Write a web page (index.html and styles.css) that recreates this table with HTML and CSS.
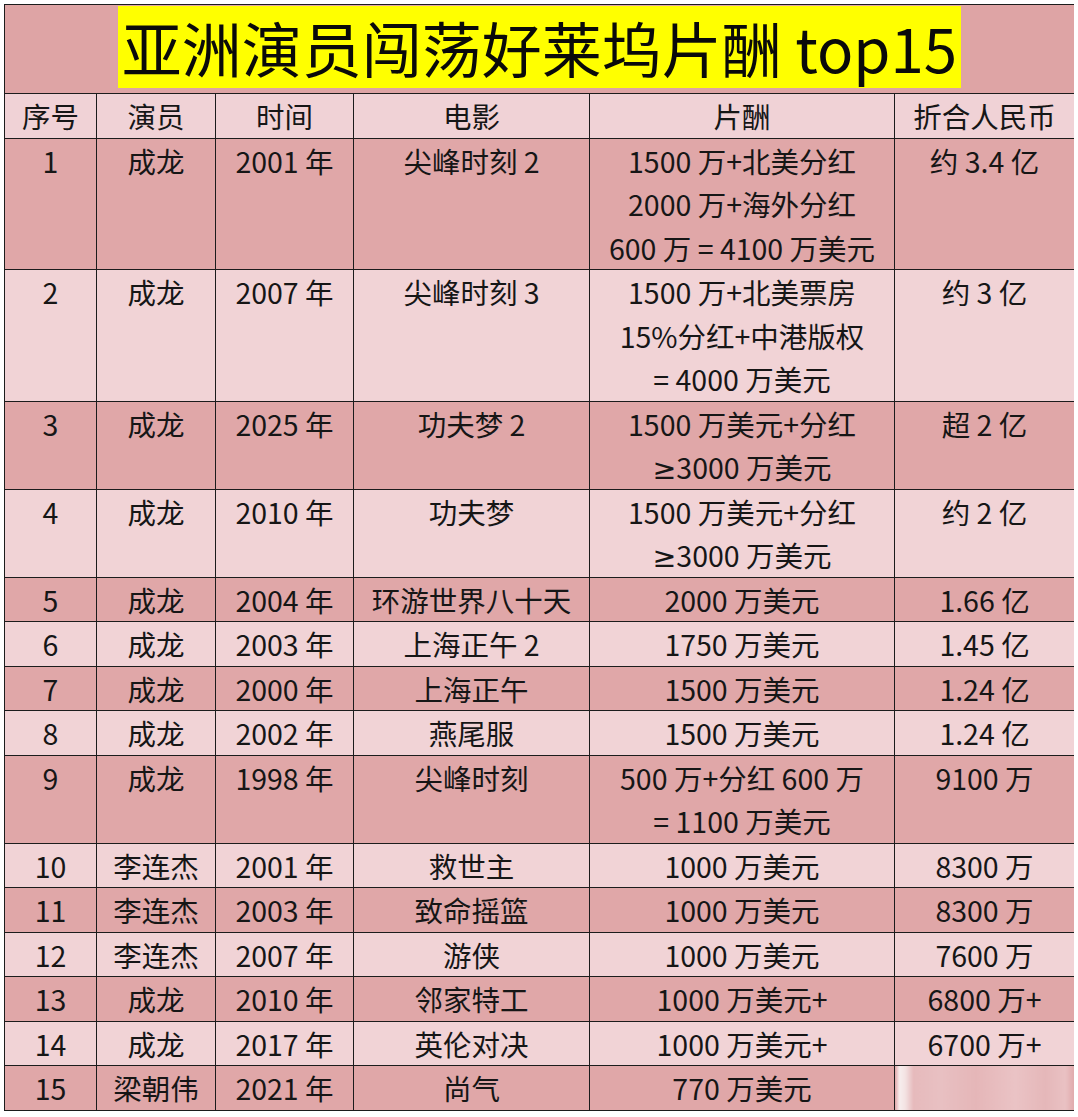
FILE: index.html
```html
<!DOCTYPE html>
<html lang="zh-CN">
<head>
<meta charset="utf-8">
<title>亚洲演员闯荡好莱坞片酬 top15</title>
<link rel="stylesheet" href="styles.css">
</head>
<body>
<table class="pay">
  <colgroup>
    <col class="c1"><col class="c2"><col class="c3"><col class="c4"><col class="c5"><col class="c6">
  </colgroup>
  <thead>
    <tr class="title-row"><th colspan="6"><span class="title">亚洲演员闯荡好莱坞片酬 top15</span></th></tr>
    <tr class="head"><th>序号</th><th>演员</th><th>时间</th><th>电影</th><th>片酬</th><th>折合人民币</th></tr>
  </thead>
  <tbody>
    <tr class="dark"><td>1</td><td>成龙</td><td>2001 年</td><td>尖峰时刻 2</td><td>1500 万+北美分红<br>2000 万+海外分红<br>600 万 = 4100 万美元</td><td>约 3.4 亿</td></tr>
    <tr class="light"><td>2</td><td>成龙</td><td>2007 年</td><td>尖峰时刻 3</td><td>1500 万+北美票房<br>15%分红+中港版权<br>= 4000 万美元</td><td>约 3 亿</td></tr>
    <tr class="dark"><td>3</td><td>成龙</td><td>2025 年</td><td>功夫梦 2</td><td>1500 万美元+分红<br><span class="ge">≥</span>3000 万美元</td><td>超 2 亿</td></tr>
    <tr class="light"><td>4</td><td>成龙</td><td>2010 年</td><td>功夫梦</td><td>1500 万美元+分红<br><span class="ge">≥</span>3000 万美元</td><td>约 2 亿</td></tr>
    <tr class="dark"><td>5</td><td>成龙</td><td>2004 年</td><td>环游世界八十天</td><td>2000 万美元</td><td>1.66 亿</td></tr>
    <tr class="light"><td>6</td><td>成龙</td><td>2003 年</td><td>上海正午 2</td><td>1750 万美元</td><td>1.45 亿</td></tr>
    <tr class="dark"><td>7</td><td>成龙</td><td>2000 年</td><td>上海正午</td><td>1500 万美元</td><td>1.24 亿</td></tr>
    <tr class="light"><td>8</td><td>成龙</td><td>2002 年</td><td>燕尾服</td><td>1500 万美元</td><td>1.24 亿</td></tr>
    <tr class="dark"><td>9</td><td>成龙</td><td>1998 年</td><td>尖峰时刻</td><td>500 万+分红 600 万<br>= 1100 万美元</td><td>9100 万</td></tr>
    <tr class="light"><td>10</td><td>李连杰</td><td>2001 年</td><td>救世主</td><td>1000 万美元</td><td>8300 万</td></tr>
    <tr class="dark"><td>11</td><td>李连杰</td><td>2003 年</td><td>致命摇篮</td><td>1000 万美元</td><td>8300 万</td></tr>
    <tr class="light"><td>12</td><td>李连杰</td><td>2007 年</td><td>游侠</td><td>1000 万美元</td><td>7600 万</td></tr>
    <tr class="dark"><td>13</td><td>成龙</td><td>2010 年</td><td>邻家特工</td><td>1000 万美元+</td><td>6800 万+</td></tr>
    <tr class="light"><td>14</td><td>成龙</td><td>2017 年</td><td>英伦对决</td><td>1000 万美元+</td><td>6700 万+</td></tr>
    <tr class="dark"><td>15</td><td>梁朝伟</td><td>2021 年</td><td>尚气</td><td>770 万美元</td><td class="mark"></td></tr>
  </tbody>
</table>
</body>
</html>
```
FILE: styles.css
```css
html, body {
  background: #ffffff;
}
body {
  margin: 4px;
  font-family: "Noto Sans CJK SC", "Noto Sans", sans-serif;
  color: #161616;
}
.pay {
  border-collapse: collapse;
  table-layout: fixed;
  width: 1070px;
}
.c1 { width: 92px; }
.c2 { width: 119px; }
.c3 { width: 138px; }
.c4 { width: 236px; }
.c5 { width: 305px; }
.c6 { width: 180px; }

.pay th, .pay td {
  border: 1px solid #1c1c1c;
  padding: 0;
  text-align: center;
  vertical-align: top;
  font-weight: 400;
  font-size: 28.5px;
  line-height: 43.5px;
  white-space: nowrap;
}
.ge {
  font-family: "Noto Sans", "DejaVu Sans", sans-serif;
  line-height: 0;
}
.title-row th {
  background: #dea4a5;
  height: 87px;
  vertical-align: top;
  padding-top: 1px;
  line-height: 82px;
}
.title {
  display: inline-block;
  background: #ffff00;
  font-size: 60px;
  line-height: 82px;
  height: 82px;
  padding: 0 4px;
  color: #0a0a0a;
  vertical-align: top;
}
.head th {
  background: #f0d2d6;
}
.dark td {
  background: #e0a7a8;
}
.light td {
  background: #f1d3d6;
}
.dark td.mark {
  background: linear-gradient(90deg, #e2aeb0 0px, #f7eeee 4px, #f3e2e2 10px, #e6babc 18px, #e8c0c2 45px, #e5b6b8 80px, #eac3c5 120px, #e5b7b9 150px, #e9c1c3 170px, #e1abad 178px);
}
```
